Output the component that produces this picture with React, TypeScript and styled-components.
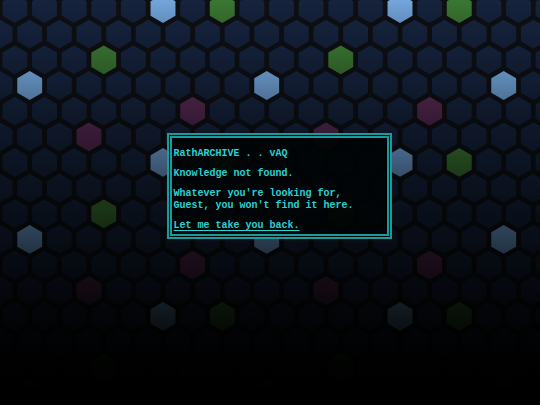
import React from "react";
import styled, { createGlobalStyle } from "styled-components";

const GlobalStyle = createGlobalStyle`
  html, body {
    margin: 0;
    padding: 0;
    background: #000;
  }
  body {
    font-family: "Liberation Mono", "DejaVu Sans Mono", monospace;
  }
`;

const Page = styled.main`
  position: relative;
  min-height: 100vh;
  overflow: hidden;
  background: #0d0f13;
`;

const Backdrop = styled.svg`
  position: absolute;
  inset: 0;
  width: 100%;
  height: 100%;
  z-index: 0;
`;

const Stage = styled.div`
  position: relative;
  z-index: 1;
  display: flex;
  justify-content: center;
  padding: 133px 0 0 18px;
`;

const Dialog = styled.section`
  box-sizing: border-box;
  width: 225px;
  height: 106px;
  padding: 10px 4px 3px 2px;
  border: 5px double #1a9a9a;
  background: rgba(1, 4, 5, 0.92);
  color: #26d3d3;
  font-size: 10px;
  line-height: 11.7px;
  font-weight: bold;
`;

const Line = styled.p`
  margin: 0 0 8.3px;
  white-space: pre;

  &:last-child {
    margin-bottom: 0;
  }
`;

const BackLink = styled.a`
  color: inherit;
  text-decoration: underline;
  text-underline-offset: 2px;
`;

// hex grid
const DX = 29.625;
const DY = 25.66;
const R = 14.4;
const HW = 12.45;

const COLORS = {
  base: "#16243f",
  blue: "#76aae2",
  green: "#3c7a34",
  purple: "#572a55",
};

const mod = (n: number, m: number) => ((n % m) + m) % m;

function hexColor(row: number, col: number): string {
  const rm = mod(row, 6);
  const km = mod(col, 8);
  if (rm === 0 && km === 4) return COLORS.blue;
  if (rm === 0 && km === 6) return COLORS.green;
  if (rm === 2 && km === 2) return COLORS.green;
  if (rm === 3 && km === 0) return COLORS.blue;
  if (rm === 4 && km === 5) return COLORS.purple;
  if (rm === 5 && km === 2) return COLORS.purple;
  return COLORS.base;
}

const hexPoints = (cx: number, cy: number) =>
  [
    [cx, cy - R],
    [cx + HW, cy - R / 2],
    [cx + HW, cy + R / 2],
    [cx, cy + R],
    [cx - HW, cy + R / 2],
    [cx - HW, cy - R / 2],
  ]
    .map(([x, y]) => `${x.toFixed(2)},${y.toFixed(2)}`)
    .join(" ");

function HexField() {
  const cells: { key: string; pts: string; fill: string }[] = [];
  for (let r = -1; r <= 16; r++) {
    const y = 8.5 + r * DY;
    const x0 = mod(r, 2) === 0 ? 44.5 : 29.7;
    for (let k = -2; k <= 19; k++) {
      cells.push({
        key: `${r}-${k}`,
        pts: hexPoints(x0 + k * DX, y),
        fill: hexColor(r, k),
      });
    }
  }

  return (
    <Backdrop viewBox="0 0 540 405" preserveAspectRatio="xMidYMin slice">
      <defs>
        <linearGradient id="cellShade" x1="0" y1="0" x2="0" y2="1">
          <stop offset="0" stopColor="#000" stopOpacity="0" />
          <stop offset="1" stopColor="#000" stopOpacity="0.12" />
        </linearGradient>
        <linearGradient
          id="fade"
          gradientUnits="userSpaceOnUse"
          x1="0"
          y1="0"
          x2="0"
          y2="390"
        >
          <stop offset="0" stopColor="#000" stopOpacity="0" />
          <stop offset="0.22" stopColor="#000" stopOpacity="0.2" />
          <stop offset="0.45" stopColor="#000" stopOpacity="0.47" />
          <stop offset="0.62" stopColor="#000" stopOpacity="0.64" />
          <stop offset="0.8" stopColor="#000" stopOpacity="0.86" />
          <stop offset="0.92" stopColor="#000" stopOpacity="0.97" />
          <stop offset="1" stopColor="#000" stopOpacity="1" />
        </linearGradient>
      </defs>
      {cells.map((c) => (
        <g key={c.key}>
          <polygon points={c.pts} fill={c.fill} />
          <polygon points={c.pts} fill="url(#cellShade)" />
        </g>
      ))}
      <rect x="0" y="0" width="540" height="405" fill="url(#fade)" />
    </Backdrop>
  );
}

export default function App() {
  return (
    <Page>
      <GlobalStyle />
      <HexField />
      <Stage>
        <Dialog>
          <Line>RathARCHIVE . . vAQ</Line>
          <Line>Knowledge not found.</Line>
          <Line>
            {"Whatever you're looking for,\nGuest, you won't find it here."}
          </Line>
          <Line>
            <BackLink href="#">Let me take you back.</BackLink>
          </Line>
        </Dialog>
      </Stage>
    </Page>
  );
}
